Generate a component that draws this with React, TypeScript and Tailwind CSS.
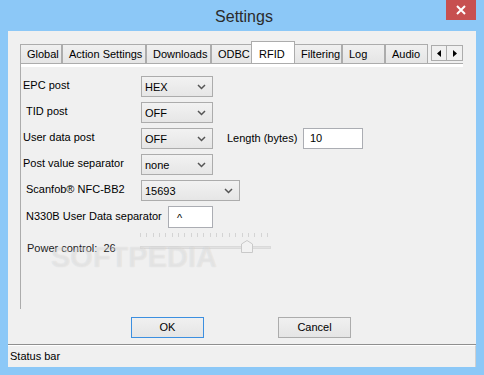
import React from "react";

const font = { fontFamily: '"Liberation Sans", Arial, sans-serif' };

type TabInfo = { name: string; w: string; active?: boolean };

const tabs: Array<TabInfo> = [
  { name: "Global", w: "w-[42px]" },
  { name: "Action Settings", w: "w-[84px]" },
  { name: "Downloads", w: "w-[65px]" },
  { name: "ODBC", w: "w-[41px]" },
  { name: "RFID", w: "w-[44px]", active: true },
  { name: "Filtering", w: "w-[48px]" },
  { name: "Log", w: "w-[43px]" },
  { name: "Audio", w: "w-[43px]" },
];

function Chevron() {
  return (
    <svg width="9" height="6" viewBox="0 0 9 6">
      <path d="M1 1 L4.5 4.5 L8 1" stroke="#555" strokeWidth="1.5" fill="none" />
    </svg>
  );
}

function Select({ value, w }: { value: string; w: string }) {
  return (
    <div
      className={`${w} h-[21px] border border-[#acacac] bg-gradient-to-b from-[#f2f2f2] to-[#e6e6e6] flex items-center justify-between pl-[3px] pr-[6px] text-black`}
    >
      <span className="pt-[2px]">{value}</span>
      <Chevron />
    </div>
  );
}

function Slider() {
  const ticks = Array.from({ length: 21 }, (_, i) => i);
  return (
    <div className="w-[132px] h-[22px] flex flex-col relative">
      <div className="flex justify-between w-[128px] h-[5px]">
        {ticks.map((t) => (
          <div key={t} className="w-px h-[4px] bg-[#d4d4d4]" />
        ))}
      </div>
      <div className="mt-[8px] h-[3px] w-[131px] bg-[#e2e2e2] border border-[#dadada]" />
      <svg
        className="absolute left-[101px] top-[7px]"
        width="12"
        height="13"
        viewBox="0 0 12 13"
      >
        <path
          d="M0.5 12.5 V4 L6 0.5 L11.5 4 V12.5 Z"
          fill="#f2f2f2"
          stroke="#c9c9c9"
        />
      </svg>
    </div>
  );
}

export default function App() {
  return (
    <div
      className="w-[484px] h-[375px] bg-[#8cc8f7] flex flex-col overflow-hidden whitespace-nowrap"
      style={font}
    >
      {/* title bar */}
      <div className="h-[31px] flex items-start">
        <div className="flex-1 pl-[42px] pt-[5px] text-center text-[16px] text-[#2b2b2b]">
          Settings
        </div>
        <div className="w-[30px] h-[20px] mr-[8px] bg-[#c75050] flex items-center justify-center">
          <svg width="10" height="10" viewBox="0 0 10 10">
            <path d="M1 1 L9 9 M9 1 L1 9" stroke="#fff" strokeWidth="2" />
          </svg>
        </div>
      </div>

      {/* client area */}
      <div className="mx-[8px] h-[336px] bg-[#f0f0f0] flex flex-col text-[11px] text-black">
        {/* tabs */}
        <div className="ml-[12px] mt-[11px] h-[21px] flex items-end">
          {tabs.map((t) =>
            t.active ? (
              <div
                key={t.name}
                className={`${t.w} h-[22px] bg-white border border-b-0 border-[#acacac] -mx-px relative z-10 flex items-start pl-[7px] pt-[4px]`}
              >
                {t.name}
              </div>
            ) : (
              <div
                key={t.name}
                className={`${t.w} h-[19px] bg-gradient-to-b from-[#f0f0f0] to-[#e5e5e5] border border-b-0 border-[#acacac] flex items-center pl-[6px] pt-[1px]`}
              >
                {t.name}
              </div>
            )
          )}
          <div className="ml-[3px] mb-[2px] flex h-[16px]">
            <div className="w-[16px] h-[16px] border border-[#acacac] bg-[#f0f0f0] flex items-center justify-center">
              <svg width="4" height="7" viewBox="0 0 4 7">
                <path d="M4 0 L0 3.5 L4 7 Z" fill="#000" />
              </svg>
            </div>
            <div className="w-[16px] h-[16px] border border-l-0 border-[#acacac] bg-[#f0f0f0] flex items-center justify-center">
              <svg width="4" height="7" viewBox="0 0 4 7">
                <path d="M0 0 L4 3.5 L0 7 Z" fill="#000" />
              </svg>
            </div>
          </div>
        </div>

        {/* tab panel */}
        <div className="ml-[12px] w-[443px] h-[246px] border-l border-t border-[#acacac] bg-white pt-[3px] flex">
          <div className="flex-1 bg-[#f0f0f0] flex flex-col relative pl-[1px]">
            <div className="h-[9px]" />
            <div className="flex items-center h-[21px]">
              <div className="w-[119px] pl-[1px] pb-[3px]">EPC post</div>
              <Select value="HEX" w="w-[72px]" />
            </div>
            <div className="flex items-center h-[21px] mt-[5px]">
              <div className="w-[119px] pl-[4px] pb-[3px]">TID post</div>
              <Select value="OFF" w="w-[72px]" />
            </div>
            <div className="flex items-center h-[21px] mt-[5px]">
              <div className="w-[119px] pl-[1px] pb-[3px]">User data post</div>
              <Select value="OFF" w="w-[72px]" />
              <div className="ml-[14px] w-[76px]">Length (bytes)</div>
              <div className="w-[60px] h-[21px] bg-white border border-[#abadb3] flex items-center pl-[6px]">
                10
              </div>
            </div>
            <div className="flex items-center h-[21px] mt-[5px]">
              <div className="w-[119px] pl-[1px] pb-[3px]">Post value separator</div>
              <Select value="none" w="w-[72px]" />
            </div>
            <div className="flex items-center h-[21px] mt-[5px]">
              <div className="w-[119px] pl-[4px] pb-[3px]">Scanfob® NFC-BB2</div>
              <Select value="15693" w="w-[99px]" />
            </div>
            <div className="flex items-center h-[22px] mt-[5px]">
              <div className="w-[146px] pl-[4px] pb-[2px]">N330B User Data separator</div>
              <div className="w-[45px] h-[22px] bg-white border border-[#abadb3] pl-[8px] pt-[3px]">
                ^
              </div>
            </div>
            <div className="flex items-start h-[22px] mt-[5px]">
              <div className="w-[118px] pl-[5px] pt-[7px] text-[#222]">
                Power control:&nbsp;&nbsp;26
              </div>
              <Slider />
            </div>
            {/* watermark */}
            <div className="absolute left-[30px] top-[169px] text-[29px] font-bold text-white/40 select-none pointer-events-none [text-shadow:0_0_1px_rgba(0,0,0,0.12)]">
              SOFTPEDIA
            </div>
          </div>
        </div>

        {/* buttons */}
        <div className="h-[35px] flex items-start pt-[8px]">
          <div className="ml-[123px] w-[73px] h-[21px] border border-[#3c8fe0] bg-gradient-to-b from-[#f0f0f0] to-[#e5e5e5] flex items-center justify-center">
            OK
          </div>
          <div className="ml-[74px] w-[73px] h-[21px] border border-[#acacac] bg-gradient-to-b from-[#f0f0f0] to-[#e5e5e5] flex items-center justify-center">
            Cancel
          </div>
        </div>

        {/* status bar */}
        <div className="flex-1 border-t border-[#8f8f8f] flex">
          <div className="flex-1 border-t border-white border-r border-r-[#d0d0d0] flex items-center pl-[2px]">
            Status bar
          </div>
        </div>
      </div>
    </div>
  );
}
